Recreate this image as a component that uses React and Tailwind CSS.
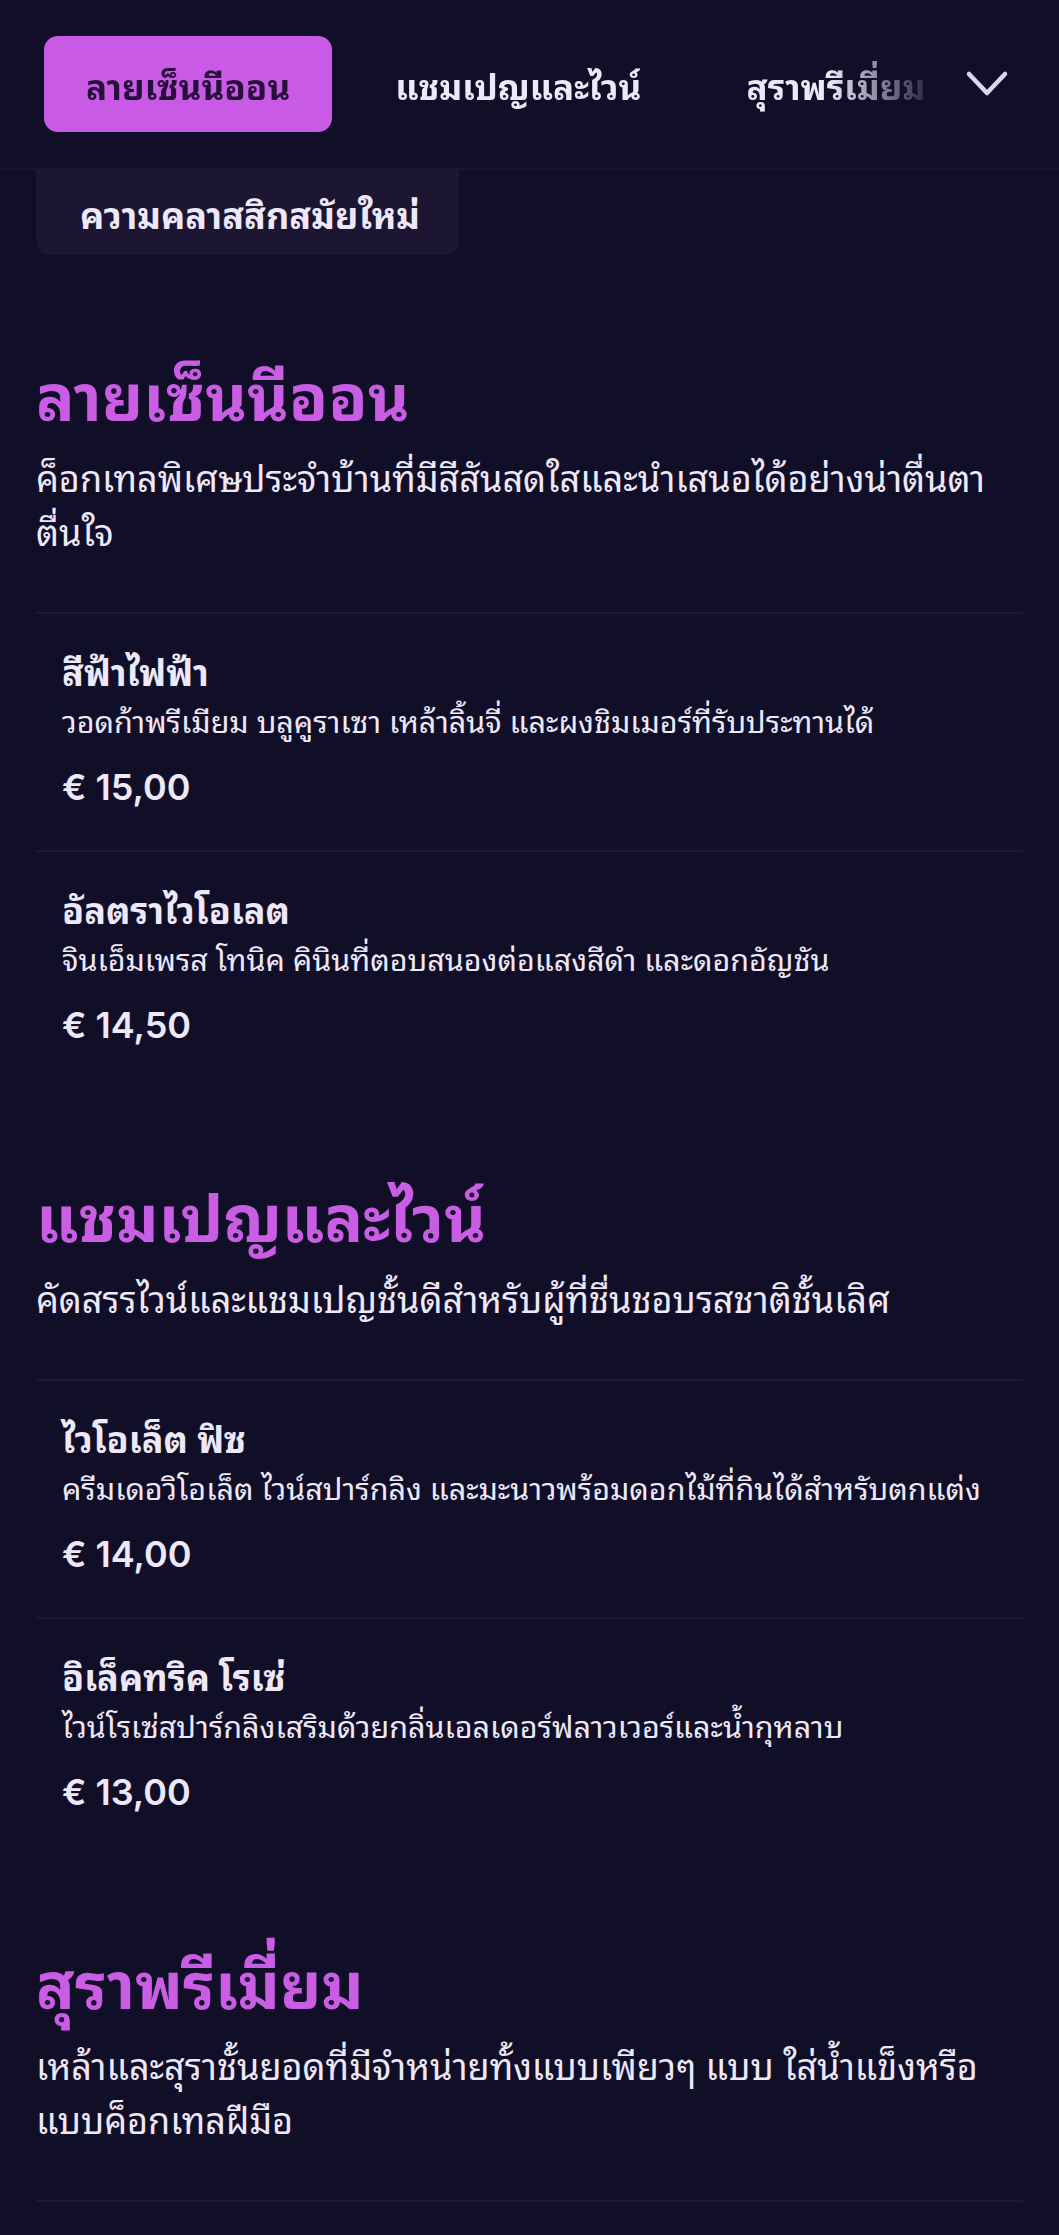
const THAI = {
  fontFamily: '"Noto Sans Thai Looped", "Noto Sans Thai", "Noto Sans", Inter, sans-serif',
};

const sections = [
  {
    title: 'ลายเซ็นนีออน',
    desc: 'ค็อกเทลพิเศษประจำบ้านที่มีสีสันสดใสและนำเสนอได้อย่างน่าตื่นตาตื่นใจ',
    items: [
      {
        name: 'สีฟ้าไฟฟ้า',
        desc: 'วอดก้าพรีเมียม บลูคูราเซา เหล้าลิ้นจี่ และผงชิมเมอร์ที่รับประทานได้',
        price: '€ 15,00',
      },
      {
        name: 'อัลตราไวโอเลต',
        desc: 'จินเอ็มเพรส โทนิค คินินที่ตอบสนองต่อแสงสีดำ และดอกอัญชัน',
        price: '€ 14,50',
      },
    ],
  },
  {
    title: 'แชมเปญและไวน์',
    desc: 'คัดสรรไวน์และแชมเปญชั้นดีสำหรับผู้ที่ชื่นชอบรสชาติชั้นเลิศ',
    items: [
      {
        name: 'ไวโอเล็ต ฟิซ',
        desc: 'ครีมเดอวิโอเล็ต ไวน์สปาร์กลิง และมะนาวพร้อมดอกไม้ที่กินได้สำหรับตกแต่ง',
        price: '€ 14,00',
      },
      {
        name: 'อิเล็คทริค โรเซ่',
        desc: 'ไวน์โรเซ่สปาร์กลิงเสริมด้วยกลิ่นเอลเดอร์ฟลาวเวอร์และน้ำกุหลาบ',
        price: '€ 13,00',
      },
    ],
  },
  {
    title: 'สุราพรีเมี่ยม',
    desc: 'เหล้าและสุราชั้นยอดที่มีจำหน่ายทั้งแบบเพียวๆ แบบ ใส่น้ำแข็งหรือแบบค็อกเทลฝีมือ',
    items: [],
  },
];

function MenuItem({ item }) {
  return (
    <div className="border-t-2 border-[#1c1833] pl-[26px] pt-[29px] pb-[38px]">
      <h3 className="text-[36px] leading-[54px] font-bold text-[#eee8fb]">{item.name}</h3>
      <p className="text-[30.5px] leading-[46px] text-[#eee8fb]">{item.desc}</p>
      <p
        className="mt-[19px] text-[36px] leading-[50px] font-semibold text-[#eee8fb]"
        style={{ fontFamily: 'Inter, sans-serif' }}
      >
        {item.price}
      </p>
    </div>
  );
}

function Section({ section }) {
  return (
    <section className="pt-[77px]">
      <h2 className="text-[64px] leading-[96px] font-bold text-[#c95de3]">{section.title}</h2>
      <p className="mt-[9px] text-[36px] leading-[54px] text-[#eee8fb]">{section.desc}</p>
      <div className="mt-[55px]">
        {section.items.map((item) => (
          <MenuItem key={item.name} item={item} />
        ))}
        {section.items.length === 0 && <div className="h-[40px] border-t-2 border-[#1c1833]" />}
      </div>
    </section>
  );
}

function Chevron() {
  return (
    <svg className="ml-[25px] h-[28px] w-[44px] shrink-0 text-[#ddd5f2]" viewBox="0 0 44 28" fill="none">
      <path d="M4 4 L22 23 L40 4" stroke="currentColor" strokeWidth="4.5" strokeLinecap="round" strokeLinejoin="round" />
    </svg>
  );
}

export default function App() {
  return (
    <div className="min-h-screen bg-[#110e28] text-[#eee8fb]" style={THAI}>
      <header className="flex h-[170px] items-center border-b-2 border-[#1a1631] pl-[44px] pr-[50px]">
        <nav
          className="flex flex-1 items-center gap-[21px] overflow-hidden"
          style={{ maskImage: 'linear-gradient(to right, black calc(100% - 110px), transparent 100%)' }}
        >
          <button className="h-[96px] shrink-0 rounded-[14px] bg-[#c95ae6] px-[42px] text-[35px] font-bold text-[#26103a]">
            ลายเซ็นนีออน
          </button>
          <button className="h-[96px] shrink-0 px-[42px] text-[35px] font-bold text-[#eee8fb]">
            แชมเปญและไวน์
          </button>
          <button className="h-[96px] shrink-0 px-[42px] text-[35px] font-bold text-[#eee8fb]">
            สุราพรีเมี่ยม
          </button>
        </nav>
        <Chevron />
      </header>

      <div className="px-[36px]">
        <div className="mb-[12px] flex h-[85px] w-[423px] items-center rounded-b-[14px] bg-[#1c1633] pl-[44px]">
          <span className="text-[36px] font-bold text-[#eee8fb]">ความคลาสสิกสมัยใหม่</span>
        </div>

        {sections.map((s) => (
          <Section key={s.title} section={s} />
        ))}
      </div>
    </div>
  );
}
